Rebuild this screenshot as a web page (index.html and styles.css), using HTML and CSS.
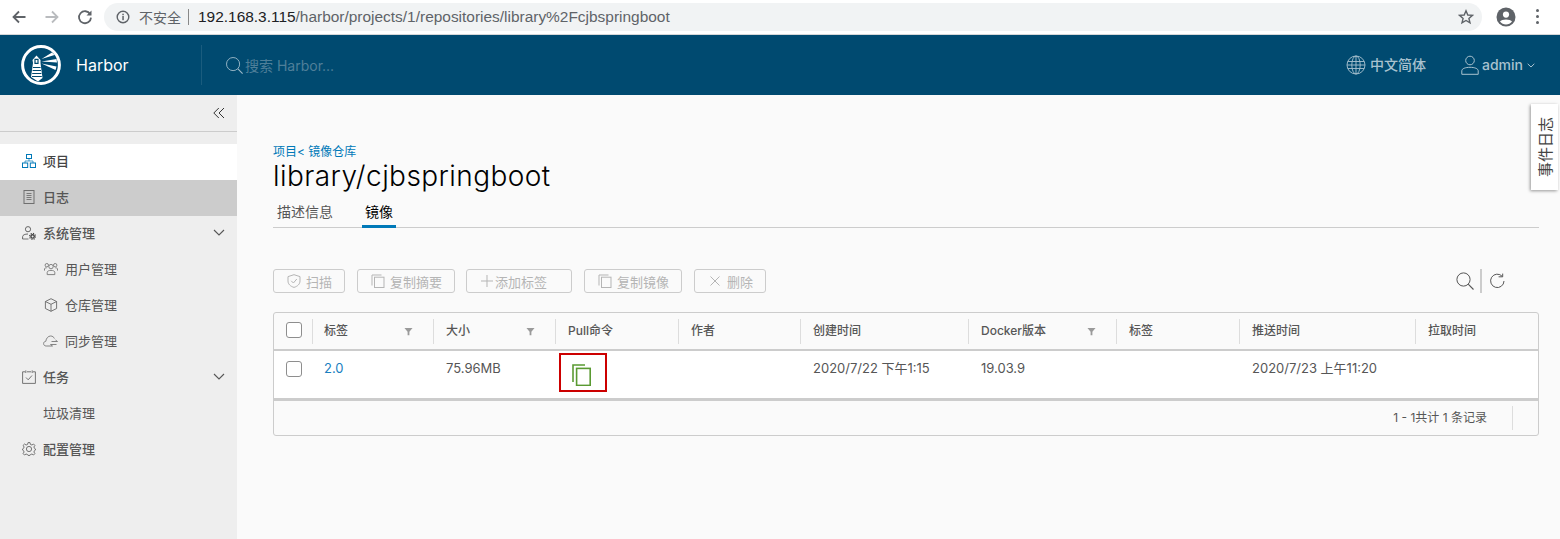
FILE: index.html
```html
<!DOCTYPE html>
<html lang="zh-CN">
<head>
    <meta charset="UTF-8">
    <meta name="viewport" content="width=device-width, initial-scale=1.0">
    <title>Harbor</title>
    <link rel="stylesheet" href="styles.css">
</head>
<body>
    <div class="chrome">
        <svg class="chrome-btn" viewBox="0 0 16 16"><path d="M14.5 8H2.5M8 2.5L2.5 8L8 13.5" fill="none" stroke="#5f6368" stroke-width="1.8"/></svg>
        <svg class="chrome-btn" viewBox="0 0 16 16"><path d="M1.5 8H13.5M8 2.5L13.5 8L8 13.5" fill="none" stroke="#b9bbbe" stroke-width="1.8"/></svg>
        <svg class="chrome-btn" viewBox="0 0 16 16"><path d="M13.2 5.2A6 6 0 1 0 14 8.6" fill="none" stroke="#5f6368" stroke-width="1.8"/><path d="M14.5 1.5V6.5H9.5Z" fill="#5f6368"/></svg>
        <div class="omnibox">
            <svg class="info-icon" viewBox="0 0 14 14"><circle cx="7" cy="7" r="5.8" fill="none" stroke="#5f6368" stroke-width="1.4"/><rect x="6.3" y="6" width="1.5" height="4.2" fill="#5f6368"/><rect x="6.3" y="3.7" width="1.5" height="1.5" fill="#5f6368"/></svg>
            <span class="not-secure">不安全</span>
            <span class="omni-sep"></span>
            <span class="url"><b>192.168.3.115</b>/harbor/projects/1/repositories/library%2Fcjbspringboot</span>
            <svg class="star" viewBox="0 0 16 16"><path d="M8 1.8L9.8 6L14.4 6.4L10.9 9.4L12 13.9L8 11.5L4 13.9L5.1 9.4L1.6 6.4L6.2 6Z" fill="none" stroke="#5f6368" stroke-width="1.4"/></svg>
        </div>
        <svg class="avatar" viewBox="0 0 20 20"><circle cx="10" cy="10" r="9.5" fill="#5f6368"/><circle cx="10" cy="7.6" r="3.1" fill="#fff"/><path d="M4 14.6C5.5 11.9 14.5 11.9 16 14.6C14.6 16.6 12.4 17.6 10 17.6C7.6 17.6 5.4 16.6 4 14.6Z" fill="#fff"/></svg>
        <div class="dots"><i></i><i></i><i></i></div>
    </div>

    <header class="topbar">
        <div class="brand">
            <svg class="logo" viewBox="0 0 40 40">
                <circle cx="20" cy="20" r="18.4" fill="none" stroke="#fff" stroke-width="3"/>
                <path d="M11.5 15L15.5 10.5L19.5 15V18L21.5 33L17 36.5L10 32L12 18Z" fill="#fff"/>
                <path d="M14 14.4H17V18.4H14Z M12 22.5H19.6 M11.6 25.5H20 M11.2 28.5H20.4 M11 31.5H20.8" fill="none" stroke="#004a70" stroke-width="1.2"/>
                <path d="M20.5 14L31 7.5L33.5 10Z M20.5 16.5L35.5 14L36 17.5Z M20.5 18.5L35.5 21.5L34.5 25Z" fill="#fff"/>
            </svg>
            <span class="brand-name">Harbor</span>
        </div>
        <div class="search">
            <svg class="search-icon" viewBox="0 0 20 20"><circle cx="8.5" cy="8.5" r="6.9" fill="none" stroke="#9ab7c7" stroke-width="1"/><path d="M13.6 13.6L18.5 18.5" stroke="#9ab7c7" stroke-width="1.2"/></svg>
            <span class="search-text">搜索 Harbor...</span>
        </div>
        <div class="nav-right">
            <svg class="globe" viewBox="0 0 20 20" fill="none" stroke="#a9c2cf" stroke-width=".9"><circle cx="10" cy="10" r="9"/><ellipse cx="10" cy="10" rx="4.2" ry="9"/><path d="M10 1V19M1.8 6.5H18.2M1.8 13.5H18.2M1 10H19"/></svg>
            <span class="nav-label lang">中文简体</span>
            <svg class="user" viewBox="0 0 18 20" fill="none" stroke="#a9c2cf" stroke-width="1"><circle cx="9" cy="5.5" r="4.3"/><path d="M.8 19.3V15.8C.8 13.6 4.5 12.3 9 12.3S17.2 13.6 17.2 15.8V19.3Z"/></svg>
            <span class="nav-label">admin</span>
            <svg class="user-caret" viewBox="0 0 8 5"><path d="M.7 .8L4 4L7.3 .8" fill="none" stroke="#a9c2cf"/></svg>
        </div>
    </header>

    <div class="layout">
        <aside class="sidebar">
            <div class="collapse">
                <svg viewBox="0 0 12 12"><path d="M5.8 1L.8 6L5.8 11M11 1L6 6L11 11" fill="none" stroke="#333"/></svg>
            </div>
            <nav class="menu">
                <a class="menu-item active">
                    <svg class="menu-icon" viewBox="0 0 14 14" fill="none" stroke="#0079b8"><rect x="4.5" y=".5" width="5" height="4"/><rect x=".5" y="9" width="5.2" height="4.5"/><rect x="8.3" y="9" width="5.2" height="4.5"/><path d="M7 4.5V7M3 9V7H11V9" stroke-width=".7"/></svg>
                    <span>项目</span>
                </a>
                <a class="menu-item selected">
                    <svg class="menu-icon" viewBox="0 0 14 14" fill="none" stroke="#6f6f6f"><rect x="2" y=".5" width="10" height="13"/><path d="M4.5 3.5H9.5M4.5 5.5H9.5M4.5 7.5H9.5M4.5 9.5H9.5" stroke-width=".9"/></svg>
                    <span>日志</span>
                </a>
                <a class="menu-item">
                    <svg class="menu-icon" viewBox="0 0 14 14" fill="none" stroke="#666"><circle cx="6" cy="3.2" r="2.6"/><path d="M.6 13V10.6C.6 9 3 8 6 8"/><path d="M.6 13H6.5" stroke-width=".9"/><circle cx="10.6" cy="10.4" r="1.7" stroke="#444" stroke-width="1.4"/><circle cx="10.6" cy="10.4" r="3" stroke="#444" stroke-width="1.1" stroke-dasharray="1.2 1.15"/></svg>
                    <span>系统管理</span>
                    <svg class="chevron" viewBox="0 0 12 7"><path d="M1 1L6 6L11 1" fill="none" stroke="#565656" stroke-width="1.1"/></svg>
                </a>
                <a class="menu-item sub">
                    <svg class="menu-icon" viewBox="0 0 14 14" fill="none" stroke="#777" stroke-width=".9"><circle cx="7" cy="4.6" r="2.2"/><path d="M3.2 12.6V10.4C3.2 9 5 8.4 7 8.4S10.8 9 10.8 10.4V12.6Z"/><circle cx="2.8" cy="3.2" r="1.7"/><circle cx="11.2" cy="3.2" r="1.7"/><path d="M.5 8.6V7C.5 6.2 1.4 5.8 2.6 5.8M13.5 8.6V7C13.5 6.2 12.6 5.8 11.4 5.8"/></svg>
                    <span>用户管理</span>
                </a>
                <a class="menu-item sub">
                    <svg class="menu-icon" viewBox="0 0 14 14" fill="none" stroke="#666" stroke-width=".9"><path d="M7 .7L12.6 3.5V10.5L7 13.3L1.4 10.5V3.5Z"/><path d="M1.4 3.5L7 6.3L12.6 3.5M7 6.3V13.3"/></svg>
                    <span>仓库管理</span>
                </a>
                <a class="menu-item sub">
                    <svg class="menu-icon wide" viewBox="0 0 16 12" fill="none" stroke="#777" stroke-width=".9"><path d="M9.5 11H3.2C1.6 11 .6 10 .6 8.6C.6 7.2 1.6 6.4 2.8 6.3C3.2 3.2 5.2 1 7.6 1C9.4 1 10.8 2 11.4 3.5"/><path d="M8.5 6.5H14.5M12.5 5L14.5 6.5M7.5 9.5H13.5M9.5 11L7.5 9.5"/></svg>
                    <span>同步管理</span>
                </a>
                <a class="menu-item">
                    <svg class="menu-icon" viewBox="0 0 14 14" fill="none" stroke="#666" stroke-width=".9"><path d="M3 1.8H.6V13.4H13.4V1.8H11M5 1.8H9"/><path d="M3.8 .4V3M10.2 .4V3" /><path d="M4 7.5L6.2 9.8L10 5.5"/></svg>
                    <span>任务</span>
                    <svg class="chevron" viewBox="0 0 12 7"><path d="M1 1L6 6L11 1" fill="none" stroke="#565656" stroke-width="1.1"/></svg>
                </a>
                <a class="menu-item plain">
                    <span>垃圾清理</span>
                </a>
                <a class="menu-item">
                    <svg class="menu-icon" viewBox="0 0 14 14" fill="none" stroke="#666" stroke-width=".9"><circle cx="7" cy="7" r="2.6"/><path d="M6 .6H8L8.4 2.4L9.9 3L11.5 2L12.9 3.4L11.9 5L12.5 6.4L13.4 6.9V8.1L12.5 8.6L11.9 10L12.9 11.6L11.5 13L9.9 12L8.4 12.6L8 13.4H6L5.6 12.6L4.1 12L2.5 13L1.1 11.6L2.1 10L1.5 8.6L.6 8.1V6.9L1.5 6.4L2.1 5L1.1 3.4L2.5 2L4.1 3L5.6 2.4Z"/></svg>
                    <span>配置管理</span>
                </a>
            </nav>
        </aside>

        <main class="content">
            <div class="crumbs">项目&lt; 镜像仓库</div>
            <h1 class="repo-title">library/cjbspringboot</h1>
            <div class="tabs">
                <span class="tab">描述信息</span>
                <span class="tab current">镜像</span>
            </div>

            <div class="toolbar">
                <button class="btn">
                    <svg class="btn-icon" viewBox="0 0 14 14" fill="none" stroke="#b5b5b5"><path d="M7 .7L13 2.6V7C13 10.2 10.4 12.4 7 13.4C3.6 12.4 1 10.2 1 7V2.6Z"/><path d="M4.2 6.8L6.4 9L9.8 5"/></svg>
                    扫描
                </button>
                <button class="btn">
                    <svg class="btn-icon" viewBox="0 0 14 14" fill="none" stroke="#b5b5b5"><path d="M1 11.5V1H10.5"/><rect x="3.5" y="3.2" width="9.5" height="10.3"/></svg>
                    复制摘要
                </button>
                <button class="btn btn-add">
                    <svg class="btn-icon" viewBox="0 0 14 14" fill="none" stroke="#b5b5b5"><path d="M7 1V13M1 7H13"/></svg>
                    添加标签
                </button>
                <button class="btn">
                    <svg class="btn-icon" viewBox="0 0 14 14" fill="none" stroke="#b5b5b5"><path d="M1 11.5V1H10.5"/><rect x="3.5" y="3.2" width="9.5" height="10.3"/></svg>
                    复制镜像
                </button>
                <button class="btn">
                    <svg class="btn-icon" viewBox="0 0 14 14" fill="none" stroke="#b5b5b5"><path d="M2.5 2.5L11.5 11.5M11.5 2.5L2.5 11.5"/></svg>
                    删除
                </button>
                <div class="tools">
                    <svg class="tool-search" viewBox="0 0 18 18"><circle cx="7.5" cy="7.5" r="6.6" fill="none" stroke="#565656"/><path d="M12.2 12.2L17.5 17.5" stroke="#565656" stroke-width="1.1"/></svg>
                    <span class="tool-sep"></span>
                    <svg class="tool-refresh" viewBox="0 0 16 16" fill="none" stroke="#565656"><path d="M13.3 3.4A6.7 6.7 0 1 0 15 8"/><path d="M9.6 3.8H13.7V.6"/></svg>
                </div>
            </div>

            <div class="grid">
                <div class="row head">
                    <div class="cell check"><span class="box"></span></div>
                    <div class="cell">标签<svg class="filter" viewBox="0 0 10 10"><path d="M.5 1H9.5L6 5.2V9.2H4V5.2Z" fill="#9a9a9a"/></svg></div>
                    <div class="cell">大小<svg class="filter" viewBox="0 0 10 10"><path d="M.5 1H9.5L6 5.2V9.2H4V5.2Z" fill="#9a9a9a"/></svg></div>
                    <div class="cell">Pull命令</div>
                    <div class="cell">作者</div>
                    <div class="cell">创建时间</div>
                    <div class="cell">Docker版本<svg class="filter" viewBox="0 0 10 10"><path d="M.5 1H9.5L6 5.2V9.2H4V5.2Z" fill="#9a9a9a"/></svg></div>
                    <div class="cell">标签</div>
                    <div class="cell">推送时间</div>
                    <div class="cell">拉取时间</div>
                </div>
                <div class="row body">
                    <div class="cell check"><span class="box"></span></div>
                    <div class="cell link">2.0</div>
                    <div class="cell">75.96MB</div>
                    <div class="cell pull">
                        <span class="pull-mark">
                            <svg viewBox="0 0 19 22" fill="none" stroke="#5a9a32" stroke-width="1.6"><path d="M1 18V1H13"/><rect x="4.6" y="4.4" width="13.6" height="17"/></svg>
                        </span>
                    </div>
                    <div class="cell"></div>
                    <div class="cell">2020/7/22 下午1:15</div>
                    <div class="cell">19.03.9</div>
                    <div class="cell"></div>
                    <div class="cell">2020/7/23 上午11:20</div>
                    <div class="cell"></div>
                </div>
                <div class="foot">
                    <span class="count">1 - 1共计 1 条记录</span>
                </div>
            </div>
        </main>
    </div>

    <div class="event-tab"><span>事件日志</span></div>
</body>
</html>
```

FILE: styles.css
```css
* {
    box-sizing: border-box;
}
body {
    margin: 0;
    height: 539px;
    overflow: hidden;
    display: flex;
    flex-direction: column;
    font-family: Inter, "Noto Sans CJK SC", sans-serif;
    background-color: #fafafa;
    color: #565656;
}

/* browser bar */
.chrome {
    height: 35px;
    flex: none;
    display: flex;
    align-items: center;
    background-color: #fff;
    border-bottom: 1px solid #d6d7d8;
    padding-bottom: 1px;
}
.chrome-btn {
    width: 16px;
    height: 16px;
    margin-left: 11px;
    margin-right: 6px;
}
.omnibox {
    width: 1378px;
    height: 28px;
    margin-left: 5px;
    border-radius: 14px;
    background-color: #f1f3f4;
    display: flex;
    align-items: center;
    padding-left: 12px;
}
.info-icon {
    width: 14px;
    height: 14px;
}
.not-secure {
    margin-left: 9px;
    font-size: 14px;
    color: #5f6368;
}
.omni-sep {
    width: 1px;
    height: 16px;
    margin: 0 9px 0 7px;
    background-color: #888;
}
.url {
    font-family: "Liberation Sans", sans-serif;
    font-size: 15.45px;
    color: #5f6368;
    flex: 1;
}
.url b {
    font-weight: normal;
    color: #202124;
}
.star {
    width: 16px;
    height: 16px;
    margin-right: 8px;
}
.avatar {
    width: 20px;
    height: 20px;
    margin-left: 14px;
}
.dots {
    margin-left: 20px;
    display: flex;
    flex-direction: column;
    gap: 3px;
}
.dots i {
    display: block;
    width: 3px;
    height: 3px;
    border-radius: 50%;
    background-color: #5f6368;
}

/* harbor header */
.topbar {
    height: 60px;
    flex: none;
    display: flex;
    align-items: center;
    background-color: #004a70;
}
.brand {
    width: 202px;
    height: 40px;
    display: flex;
    align-items: center;
    padding-left: 21px;
    border-right: 1px solid #1a5c7e;
}
.logo {
    width: 40px;
    height: 40px;
}
.brand-name {
    margin-left: 15px;
    font-size: 16px;
    color: #fff;
}
.search {
    margin-left: 23px;
    display: flex;
    align-items: center;
}
.search-icon {
    width: 19px;
    height: 19px;
}
.search-text {
    margin-left: 1px;
    font-size: 14px;
    color: #4f7f99;
}
.nav-right {
    margin-left: auto;
    display: flex;
    align-items: center;
    padding-right: 25px;
}
.globe {
    width: 20px;
    height: 20px;
    margin-right: 4px;
}
.nav-label {
    font-size: 14px;
    font-weight: 500;
    line-height: 18px;
    padding-bottom: 1px;
    color: #a9c2cf;
}
.lang {
    margin-right: 35px;
}
.user {
    width: 18px;
    height: 20px;
    margin-right: 3px;
}
.user-caret {
    width: 8px;
    height: 5px;
    margin-left: 4px;
}

/* sidebar */
.layout {
    flex: 1;
    display: flex;
    min-height: 0;
}
.sidebar {
    width: 237px;
    flex: none;
    background-color: #eee;
}
.collapse {
    height: 37px;
    padding: 12px 12px 0 0;
    display: flex;
    justify-content: flex-end;
    border-bottom: 1px solid #ccc;
}
.collapse svg {
    width: 12px;
    height: 12px;
}
.menu {
    margin-top: 12px;
}
.menu-item {
    height: 36px;
    display: flex;
    align-items: center;
    padding-left: 22px;
    padding-bottom: 3px;
    font-size: 13px;
    font-weight: 500;
    color: #565656;
}
.menu-item.active {
    background-color: #fff;
    color: #444;
}
.menu-item.selected {
    background-color: #ccc;
}
.menu-item.sub {
    padding-left: 44px;
    font-weight: normal;
}
.menu-item.plain {
    padding-left: 43px;
    font-weight: normal;
}
.menu-icon {
    width: 14px;
    height: 14px;
    margin-right: 7px;
    flex: none;
}
.menu-icon.wide {
    width: 16px;
    margin-left: -1px;
    margin-right: 6px;
}
.chevron {
    width: 12px;
    height: 7px;
    margin-left: auto;
    margin-right: 12px;
}

/* repository page */
.content {
    flex: 1;
    min-width: 0;
    padding: 49px 21px 0 36px;
}
.crumbs {
    font-size: 12px;
    line-height: 14px;
    color: #0079b8;
    padding-top: 1px;
    height: 15px;
}
.repo-title {
    margin: 0;
    font-size: 28px;
    font-weight: 300;
    line-height: 35px;
    letter-spacing: 0.43px;
    color: #000;
}
.tabs {
    height: 34px;
    padding-left: 4px;
    display: flex;
    gap: 32px;
    border-bottom: 1px solid #ccc;
}
.tab {
    font-size: 14px;
    line-height: 24px;
    height: 32px;
    padding-top: 6px;
    color: #565656;
}
.tab.current {
    color: #000;
    padding: 6px 3px 0;
    margin-left: -3px;
    border-bottom: 3px solid #0079b8;
    height: 34px;
}

.toolbar {
    height: 26px;
    margin-top: 40px;
    display: flex;
    align-items: center;
    gap: 12px;
}
.btn {
    height: 24px;
    padding: 0 12px 0 13px;
    display: flex;
    align-items: center;
    font-family: inherit;
    font-size: 13px;
    color: #b5b5b5;
    background: none;
    border: 1px solid #ccc;
    border-radius: 3px;
}
.btn-add {
    margin-left: -1px;
    padding-right: 24px;
}
.btn-icon {
    width: 14px;
    height: 14px;
    margin-right: 5px;
}
.btn-add .btn-icon {
    margin-right: 1px;
}
.tools {
    margin-left: auto;
    display: flex;
    align-items: center;
    padding-right: 34px;
}
.tool-search {
    width: 18px;
    height: 18px;
}
.tool-sep {
    width: 2px;
    height: 24px;
    margin: 0 7px 0 6px;
    background-color: #ccc;
}
.tool-refresh {
    width: 16px;
    height: 16px;
}

/* table */
.grid {
    margin-top: 18px;
    height: 124px;
    background-color: #fafafa;
    border: 1px solid #ccc;
    border-radius: 3px;
    overflow: hidden;
}
.row {
    display: grid;
    grid-template-columns: 38px 121px 122px 123px 122px 168px 148px 123px 176px 1fr;
    font-size: 12px;
}
.head {
    height: 38px;
    border-bottom: 2px solid #ccc;
    align-items: center;
    font-weight: 500;
}
.head .cell {
    height: 25px;
    line-height: 23px;
    padding-left: 12px;
    border-left: 1px solid #ddd;
    position: relative;
}
.head .cell:nth-child(2) {
    padding-left: 11px;
}
.head .cell.check {
    border-left: none;
}
.filter {
    position: absolute;
    right: 20px;
    top: 8px;
    width: 9px;
    height: 9px;
}
.body {
    height: 50px;
    font-size: 13px;
    background-color: #fff;
    border-bottom: 3px solid #ccc;
}
.body .cell {
    padding: 9px 0 0 13px;
    line-height: 16px;
}
.body .cell.link {
    padding-left: 12px;
}
.head .cell.check,
.body .cell.check {
    padding: 0 0 0 12px;
}
.body .cell.check {
    padding-top: 10px;
}
.box {
    display: block;
    width: 16px;
    height: 16px;
    border: 1px solid #8e8e8e;
    border-radius: 3px;
    background-color: #fff;
}
.head .box {
    margin-top: 3px;
}
.link {
    color: #1a80c0;
}
.body .cell.pull {
    padding: 2px 0 0 4px;
}
.pull-mark {
    display: flex;
    align-items: center;
    justify-content: center;
    width: 48px;
    height: 39px;
    padding: 5px 4px 0 0;
    border: 2px solid #c00;
}
.pull-mark svg {
    width: 19px;
    height: 22px;
}
.foot {
    height: 33px;
    display: flex;
    align-items: center;
    justify-content: flex-end;
    padding-right: 25px;
}
.count {
    height: 24px;
    line-height: 24px;
    padding-right: 25px;
    font-size: 12px;
    border-right: 1px solid #ddd;
}

.event-tab {
    position: absolute;
    top: 104px;
    right: 2px;
    width: 27px;
    height: 86px;
    display: flex;
    align-items: center;
    justify-content: center;
    background-color: #fff;
    box-shadow: -1px 1px 3px rgba(0, 0, 0, 0.4);
}
.event-tab span {
    writing-mode: vertical-rl;
    text-orientation: sideways;
    transform: rotate(180deg);
    font-size: 15px;
    color: #444;
}
```
